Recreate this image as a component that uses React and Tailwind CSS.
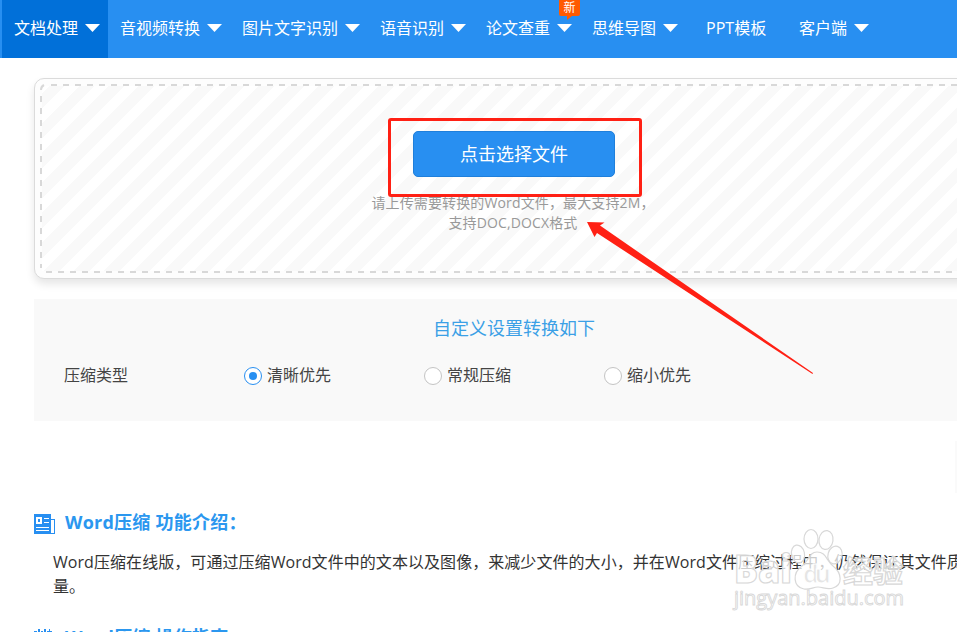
import React from 'react';

const NAV_ITEMS = [
  { label: '文档处理', caret: true, active: true },
  { label: '音视频转换', caret: true },
  { label: '图片文字识别', caret: true },
  { label: '语音识别', caret: true },
  { label: '论文查重', caret: true, badge: '新' },
  { label: '思维导图', caret: true },
  { label: 'PPT模板' },
  { label: '客户端', caret: true },
];

const OPTIONS = ['清晰优先', '常规压缩', '缩小优先'];

const Caret = () => (
  <svg width="15" height="8" viewBox="0 0 15 8" className="ml-[7px] shrink-0">
    <path d="M0 0H15L7.5 8Z" fill="#fff" />
  </svg>
);

const NavItem = ({ item }) => (
  <div
    className={`relative flex h-full shrink-0 items-center whitespace-nowrap pb-[2px] ${item.active ? 'bg-[#0170d9]' : ''} ${item.caret ? 'pl-3 pr-2' : 'w-[101px] pl-5'}`}
  >
    <span className="leading-6">{item.label}</span>
    {item.caret && <Caret />}
    {item.badge && (
      <div className="absolute left-[85px] top-0 h-4 w-[21px] rounded-b-xs bg-[#ff5a00] text-center text-xs leading-4">
        {item.badge}
        <svg width="6" height="4" className="absolute left-2 top-4">
          <path d="M0 0H5L0 4Z" fill="#ff5a00" />
        </svg>
      </div>
    )}
  </div>
);

const DashedFrame = () => (
  <svg width="948" height="189" className="absolute left-[5px] top-[5px]">
    <g fill="none" stroke="#d8d8d8" strokeWidth="2" strokeDasharray="6 6">
      <path d="M11 1H940" />
      <path d="M1 12V184" />
      <path d="M6 188H940" />
      <path d="M947 12V184" />
      <path d="M1 6C1 3 2 2 4 1" strokeDasharray="none" />
    </g>
  </svg>
);

const UploadBox = () => (
  <div className="relative h-[201px] rounded-[10px] border border-[#dbdbdb] bg-[#fdfdfd] p-[7px] shadow-[0_5px_8px_rgba(0,0,0,0.1)]">
    <DashedFrame />
    <div className="flex h-full flex-col items-center bg-[repeating-linear-gradient(135deg,#fff_0px,#fff_4.95px,#f9f9f9_4.95px,#f9f9f9_15.56px,#fff_15.56px,#fff_21.213px)] pt-[45px]">
      <button className="h-[46px] w-[202px] rounded-[5px] border border-[#1f7fdb] bg-[#288ff1] text-lg leading-none text-white">
        点击选择文件
      </button>
      <p className="mt-4 mr-[2px] text-center text-sm leading-5 tracking-[0.13px] text-[#999]">
        请上传需要转换的Word文件，最大支持2M，
        <br />
        支持DOC,DOCX格式
      </p>
    </div>
  </div>
);

const Radio = ({ label, checked }) => (
  <label className="flex w-[180px] items-center">
    <span
      className={`mt-[2px] flex size-[18px] items-center justify-center rounded-full border bg-white ${checked ? 'border-[#288ff1]' : 'border-[#c4c4c4]'}`}
    >
      {checked && <span className="size-2 rounded-full bg-[#288ff1]" />}
    </span>
    <span className="ml-[5px]">{label}</span>
  </label>
);

const Settings = () => (
  <div className="mt-5 h-[122px] bg-[#f9f9f9] pt-[15px] text-[#444]">
    <h3 className="text-center text-lg leading-7 text-[#3ba0e6]">自定义设置转换如下</h3>
    <div className="mt-[21px] flex items-center pl-[30px] leading-6">
      <span className="w-[180px]">压缩类型</span>
      {OPTIONS.map((option, index) => (
        <Radio key={option} label={option} checked={index === 0} />
      ))}
    </div>
  </div>
);

const NewsIcon = () => (
  <svg width="22" height="20" viewBox="0 0 22 20" shapeRendering="crispEdges" className="mt-1">
    <path d="M0 0H17V20H0Z" fill="#288ff1" />
    <path d="M2 3H8V10H2ZM10 4H15V5H10ZM10 8H15V9H10ZM2 13H15V14H2ZM2 16H15V17H2Z" fill="#fff" />
    <path d="M4 5H6V8H4Z" fill="#288ff1" />
    <path d="M17 5.5H20.5V19.5H17" fill="none" stroke="#288ff1" />
  </svg>
);

const CalendarIcon = () => (
  <svg width="22" height="20" viewBox="0 0 22 20" shapeRendering="crispEdges" className="mt-1">
    <path d="M0 2H3V5H4V0H6V5H7V2H9V5H10V0H12V5H13V2H15V0H16V2H18V20H0Z" fill="#288ff1" />
  </svg>
);

const SectionTitle = ({ icon, children }) => (
  <h2 className="flex h-[26px] items-center text-lg font-bold leading-[26px] tracking-[0.25px] text-[#2b97ef]">
    {icon}
    <span className="ml-[9px]">{children}</span>
  </h2>
);

const Watermark = () => (
  <svg width="180" height="92" className="absolute left-[730px] top-[525px]">
    <g fill="#fff" fillOpacity="0.75" stroke="#d8d8d8" strokeWidth="1.2">
      <ellipse cx="68" cy="29" rx="6.5" ry="9" transform="rotate(-12 68 29)" />
      <ellipse cx="81" cy="14" rx="7" ry="9.5" />
      <ellipse cx="96" cy="15" rx="7" ry="9.5" transform="rotate(8 96 15)" />
      <ellipse cx="105" cy="30" rx="7" ry="9" transform="rotate(16 105 30)" />
      <path d="M87 27C79 27 79 36 72 41C62 48 63 62 74 64C80 65 83 62 88 62C93 62 97 65 103 63C113 60 112 48 103 41C96 35 96 27 87 27Z" />
      <text x="4" y="58" fontSize="38" fontWeight="800" textLength="58" lengthAdjust="spacingAndGlyphs">Bai</text>
      <text x="73" y="58" fontSize="25" fontWeight="700" fill="#ddd" stroke="#fff" textLength="28">du</text>
      <text x="113" y="57" fontSize="30" fontWeight="700" textLength="60">经验</text>
      <text x="4" y="80" fontSize="20" strokeWidth="0.9" textLength="170" lengthAdjust="spacingAndGlyphs">jingyan.baidu.com</text>
    </g>
  </svg>
);

const Annotations = () => (
  <>
    <div className="absolute left-[388px] top-[118px] h-[79px] w-[254px] rounded-[3px] border-3 border-[#ff2014]" />
    <svg width="230" height="156" viewBox="585 220 230 156" className="absolute left-[585px] top-[220px]">
      <path d="M587 222L604.5 222.5L600 225.5L813 373L812.5 374L597 233L594.5 237Z" fill="#ff2014" />
    </svg>
  </>
);

export default function App() {
  return (
    <div className="relative h-[632px] w-full overflow-hidden bg-white font-['Open_Sans','Noto_Sans_CJK_SC',sans-serif] text-base">
      <nav className="flex h-[58px] bg-[#288ff1] pl-[2px] text-white">
        {NAV_ITEMS.map((item) => (
          <NavItem key={item.label} item={item} />
        ))}
      </nav>

      <main className="ml-[34px] mt-5 w-[960px]">
        <UploadBox />
        <Settings />

        <div className="mt-5 flex h-[52px] pl-[921px]">
          <div className="w-10 bg-[#fafafa]" />
        </div>

        <section className="mt-4 h-[115px]">
          <SectionTitle icon={<NewsIcon />}>Word压缩 功能介绍：</SectionTitle>
          <p className="mt-[15px] w-[935px] pl-[19px] leading-6 tracking-[0.06px] text-[#333]">
            Word压缩在线版，可通过压缩Word文件中的文本以及图像，来减少文件的大小，并在Word文件压缩过程中，仍然保证其文件质量。
          </p>
        </section>
        <SectionTitle icon={<CalendarIcon />}>Word压缩 操作指南：</SectionTitle>
      </main>

      <Watermark />
      <Annotations />
    </div>
  );
}
